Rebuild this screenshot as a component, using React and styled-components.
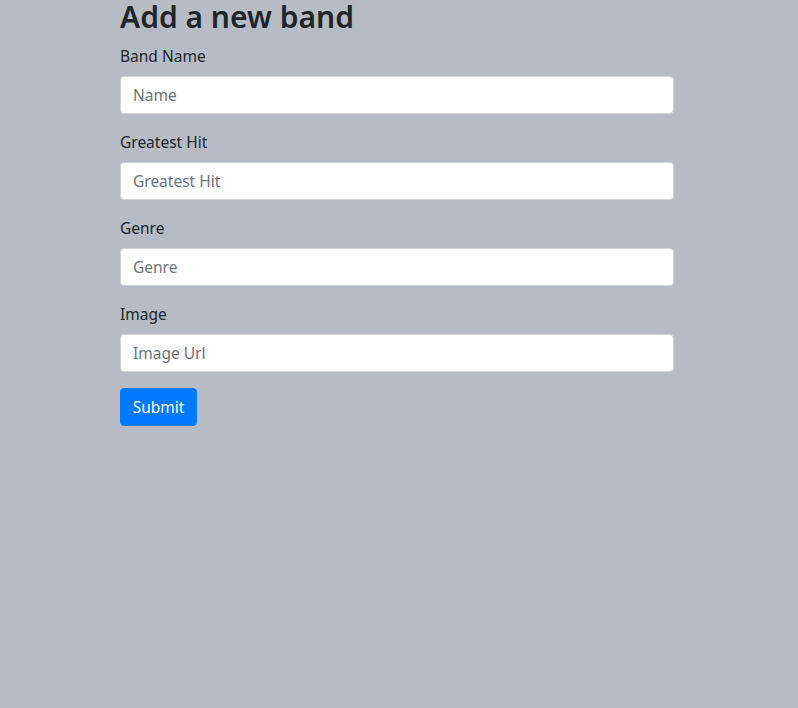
import React from "react";
import styled, { createGlobalStyle } from "styled-components";

const GlobalStyle = createGlobalStyle`
  html, body {
    margin: 0;
    padding: 0;
    background-color: #b7bcc4;
    min-height: 100%;
  }
  body {
    font-family: "Noto Sans", "Open Sans", sans-serif;
    font-size: 16px;
    line-height: 1.5;
    color: #212529;
  }
  * {
    box-sizing: border-box;
  }
`;

const Page = styled.div`
  min-height: 708px;
  background-color: #b7bcc4;
`;

const FormWrap = styled.form`
  width: 554px;
  margin-left: 120px;
  display: flex;
  flex-direction: column;
`;

const Title = styled.h2`
  margin: 0 0 10px;
  font-size: 30px;
  font-weight: 600;
  line-height: 34px;
`;

const Group = styled.div`
  display: flex;
  flex-direction: column;
  margin-bottom: 16px;
`;

const Label = styled.label`
  display: block;
  margin-bottom: 8px;
  font-size: 15.5px;
  line-height: 24px;
`;

const Input = styled.input`
  display: block;
  width: 100%;
  height: 38px;
  padding: 6px 12px;
  font-family: inherit;
  font-size: 15.5px;
  line-height: 24px;
  color: #495057;
  background-color: #fff;
  border: 1px solid #ced4da;
  border-radius: 4px;
  outline: none;
  &::placeholder {
    color: #6c757d;
  }
`;

const SubmitButton = styled.button`
  align-self: flex-start;
  width: 77px;
  height: 38px;
  padding: 6px 0;
  font-family: inherit;
  font-size: 15.5px;
  line-height: 24px;
  color: #fff;
  background-color: #007bff;
  border: 1px solid #007bff;
  border-radius: 4px;
  cursor: pointer;
`;

const fields = [
  { id: "name", label: "Band Name", placeholder: "Name" },
  { id: "hit", label: "Greatest Hit", placeholder: "Greatest Hit" },
  { id: "genre", label: "Genre", placeholder: "Genre" },
  { id: "image", label: "Image", placeholder: "Image Url" },
];

const App = () => (
  <Page>
    <GlobalStyle />
    <FormWrap onSubmit={(e) => e.preventDefault()}>
      <Title>Add a new band</Title>
      {fields.map((field) => (
        <Group key={field.id}>
          <Label htmlFor={field.id}>{field.label}</Label>
          <Input id={field.id} type="text" placeholder={field.placeholder} />
        </Group>
      ))}
      <SubmitButton type="submit">Submit</SubmitButton>
    </FormWrap>
  </Page>
);

export default App;
